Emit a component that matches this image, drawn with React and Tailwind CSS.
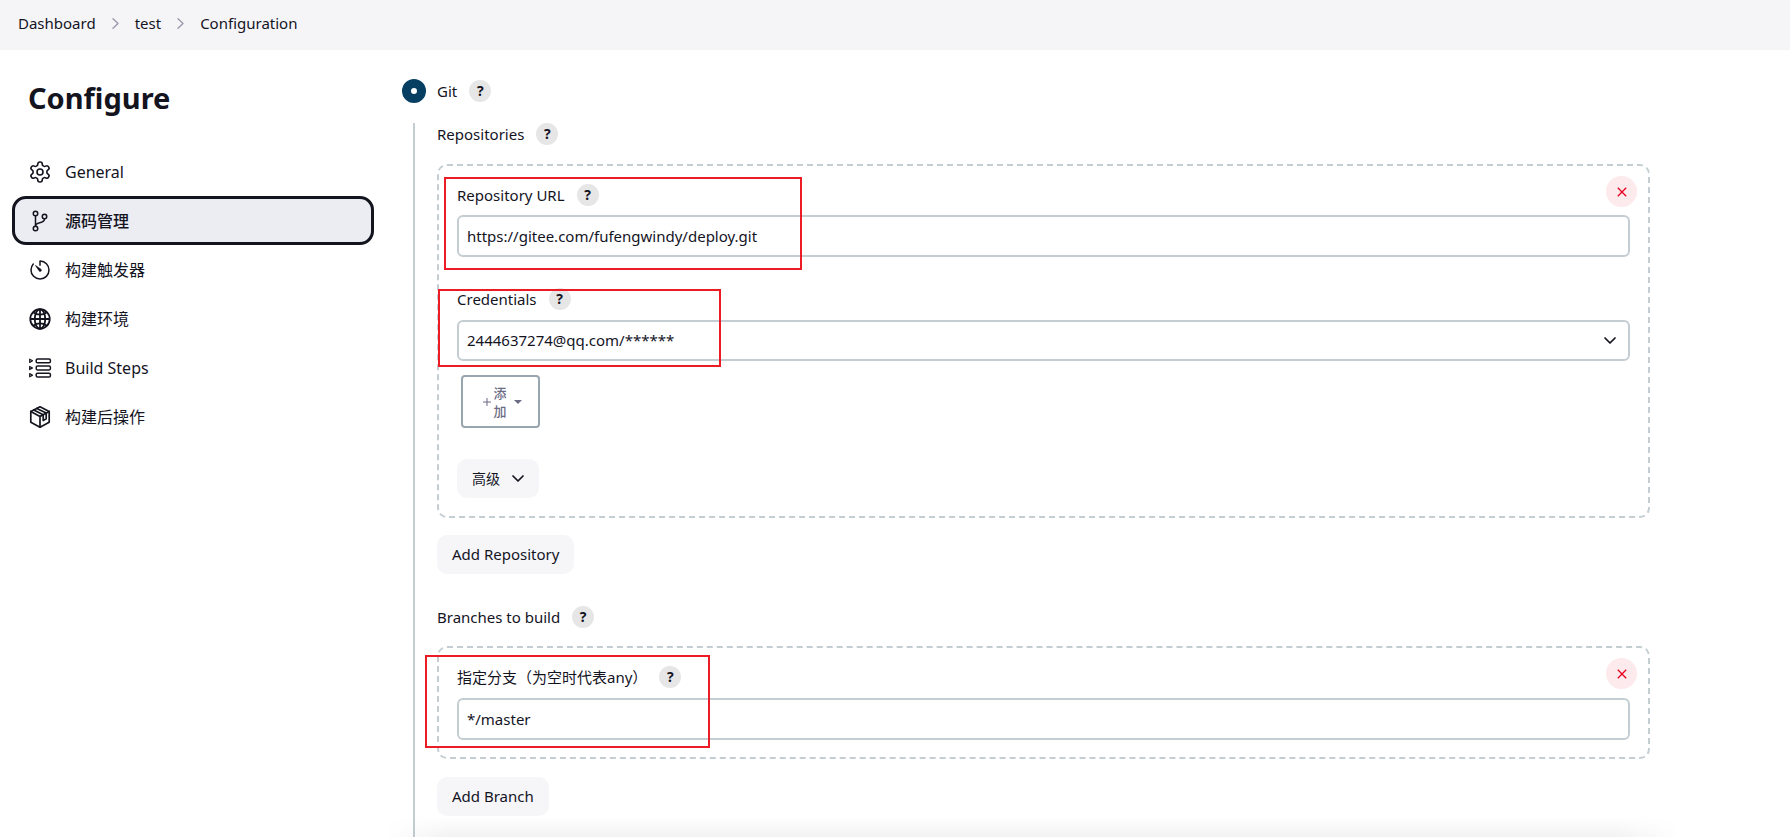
import { IoGitBranchOutline, IoTimerOutline, IoGlobeOutline } from "react-icons/io5";

const ink = "text-[#14141f]";

function GearIcon({ className }) {
  return (
    <svg className={className} viewBox="0 0 24 24" fill="none" stroke="currentColor" strokeWidth="1.6" strokeLinejoin="round" strokeLinecap="round">
      <path d="M12.22 2h-.44a2 2 0 0 0-2 2v.18a2 2 0 0 1-1 1.73l-.43.25a2 2 0 0 1-2 0l-.15-.08a2 2 0 0 0-2.73.73l-.22.38a2 2 0 0 0 .73 2.73l.15.1a2 2 0 0 1 1 1.72v.51a2 2 0 0 1-1 1.74l-.15.09a2 2 0 0 0-.73 2.73l.22.38a2 2 0 0 0 2.73.73l.15-.08a2 2 0 0 1 2 0l.43.25a2 2 0 0 1 1 1.73V20a2 2 0 0 0 2 2h.44a2 2 0 0 0 2-2v-.18a2 2 0 0 1 1-1.73l.43-.25a2 2 0 0 1 2 0l.15.08a2 2 0 0 0 2.73-.73l.22-.39a2 2 0 0 0-.73-2.73l-.15-.08a2 2 0 0 1-1-1.74v-.5a2 2 0 0 1 1-1.74l.15-.09a2 2 0 0 0 .73-2.73l-.22-.38a2 2 0 0 0-2.73-.73l-.15.08a2 2 0 0 1-2 0l-.43-.25a2 2 0 0 1-1-1.73V4a2 2 0 0 0-2-2z" />
      <circle cx="12" cy="12" r="3" />
    </svg>
  );
}

function StepsIcon({ className }) {
  return (
    <svg className={className} viewBox="0 0 24 24" fill="none" stroke="currentColor" strokeWidth="1.5" strokeLinejoin="round">
      <rect x="8.2" y="2.9" width="14.2" height="3.8" rx="1.3" />
      <rect x="8.2" y="10.1" width="14.2" height="3.8" rx="1.3" />
      <rect x="8.2" y="17.3" width="14.2" height="3.8" rx="1.3" />
      <path strokeWidth="1.2" d="M1.7 3.2l2.8 1.6-2.8 1.6zM1.7 10.4L4.5 12l-2.8 1.6zM1.7 17.6l2.8 1.6-2.8 1.6z" />
    </svg>
  );
}

function PackageIcon({ className }) {
  return (
    <svg className={className} viewBox="0 0 24 24" fill="none" stroke="currentColor" strokeWidth="1.7" strokeLinejoin="round" strokeLinecap="round">
      <path d="M12 1.8l9.2 4.6v10.9L12 22.2l-9.2-4.9V6.4z" />
      <path d="M2.8 6.4L12 11.4l9.2-5M12 11.4v10.8" />
      <path d="M5.8 4.9l9.4 4.9M8.8 3.4l9.4 4.7M15.2 9.8v5.6l3-1.7V8.1" />
    </svg>
  );
}

function ChevronRight() {
  return (
    <svg className="h-[11px] w-[7px]" viewBox="0 0 7 11" fill="none" stroke="#9a9aae" strokeWidth="1.4" strokeLinecap="round" strokeLinejoin="round">
      <path d="M1 .8l5 4.7-5 4.7" />
    </svg>
  );
}

function ChevronDown({ className }) {
  return (
    <svg className={className} viewBox="0 0 12 7" fill="none" stroke="currentColor" strokeWidth="1.7" strokeLinecap="round" strokeLinejoin="round">
      <path d="M1 1l5 5 5-5" />
    </svg>
  );
}

const nav = [
  { label: "General", Icon: GearIcon },
  { label: "源码管理", Icon: IoGitBranchOutline, active: true },
  { label: "构建触发器", Icon: IoTimerOutline },
  { label: "构建环境", Icon: IoGlobeOutline, heavy: true },
  { label: "Build Steps", Icon: StepsIcon },
  { label: "构建后操作", Icon: PackageIcon },
];

function Help({ topic }) {
  return (
    <button type="button" aria-label={`Help for ${topic}`} className="flex size-[22px] shrink-0 items-center justify-center rounded-full bg-[#e6e6e6] text-sm font-bold leading-none">
      ?
    </button>
  );
}

function Label({ htmlFor, children }) {
  return (
    <div className="flex h-[22px] items-center gap-3">
      {htmlFor ? <label htmlFor={htmlFor}>{children}</label> : <span>{children}</span>}
      <Help topic={children} />
    </div>
  );
}

function Remove({ topic }) {
  return (
    <button type="button" aria-label={`Delete ${topic}`} className="absolute top-[10px] right-[11px] flex size-[31px] items-center justify-center rounded-full bg-[#fdeaec] text-[#e6001f]">
      <svg className="size-[10px]" viewBox="0 0 10 10" fill="none" stroke="currentColor" strokeWidth="1.3">
        <path d="M.8.8l8.4 8.4M9.2.8L.8 9.2" />
      </svg>
    </button>
  );
}

function Mark({ className }) {
  return <div aria-hidden="true" className={`pointer-events-none absolute border-2 border-[#ed1c24] ${className}`} />;
}

const group = "relative rounded-[10px] border-2 border-dashed border-[#c3cdd2] px-[18px] pt-[18px]";
const box = "w-full rounded-md border-2 border-[#c3cdd2] bg-white px-2";
const soft = "rounded-[10px] bg-[#f6f6f9]";

export default function App() {
  return (
    <div className={`flex h-screen flex-col overflow-hidden bg-white font-['Noto_Sans','Noto_Sans_CJK_SC',sans-serif] text-[15px] ${ink}`}>
      <header className="h-[50px] shrink-0 bg-[#f5f5f8]">
        <nav aria-label="Breadcrumb" className="flex h-[46px] items-center gap-4 px-[18px]">
          <a href="#dashboard">Dashboard</a>
          <ChevronRight />
          <a href="#test">test</a>
          <ChevronRight />
          <a href="#configuration">Configuration</a>
        </nav>
      </header>

      <div className="flex min-h-0 flex-1">
        <aside className="w-[402px] shrink-0 pl-3 pr-7 pt-7">
          <h1 className="px-4 text-[29px] font-bold leading-10">Configure</h1>
          <nav aria-label="Sections" className="mt-[29px] flex flex-col">
            {nav.map(({ label, Icon, active, heavy }) => (
              <a
                key={label}
                href={`#${label}`}
                className={`flex h-[49px] items-center gap-[13px] rounded-[14px] border-[3px] px-[13px] text-base ${active ? "border-[#14141f] bg-[#ecedf3] font-medium" : "border-transparent"}`}
              >
                <Icon className={`size-6 shrink-0 ${heavy ? "[&_*]:[stroke-width:38]" : ""}`} />
                {label}
              </a>
            ))}
          </nav>
        </aside>

        <main className="min-w-0 flex-1 pr-[140px] pt-[29px]">
          <div className="flex h-6 items-center">
            <input id="scm-git" type="radio" name="scm" defaultChecked className="size-6 appearance-none rounded-full border-[9px] border-[#073f63] bg-white" />
            <label htmlFor="scm-git" className="ml-[11px] mr-3">Git</label>
            <Help topic="Git" />
          </div>

          <section className="ml-[11px] mt-5 h-full border-l-2 border-[#c3cdd2] pl-[22px]">
            <Label>Repositories</Label>

            <div className={`${group} mt-[19px] pb-[18px]`}>
              <Remove topic="repository" />
              <Label htmlFor="repo-url">Repository URL</Label>
              <input id="repo-url" type="text" defaultValue="https://gitee.com/fufengwindy/deploy.git" className={`${box} mt-[9px] block h-[42px]`} />
              <div className="mt-[31px]">
                <Label htmlFor="credentials">Credentials</Label>
              </div>
              <div className="relative mt-[10px]">
                <select id="credentials" className={`${box} block h-[41px] appearance-none`}>
                  <option>2444637274@qq.com/******</option>
                </select>
                <ChevronDown className="pointer-events-none absolute right-[14px] top-[17px] h-[7px] w-3" />
              </div>
              <button type="button" className="ml-1 mt-[14px] flex h-[53px] w-[79px] items-center justify-center gap-[2px] rounded border-2 border-[#98a6b0] pl-1 text-[13px] font-medium leading-[18px] text-[#6b6b85]">
                <svg className="size-2" viewBox="0 0 8 8" stroke="currentColor" strokeWidth="1"><path d="M4 0v8M0 4h8" /></svg>
                <span className="w-[14px]">添加</span>
                <svg className="ml-[5px] h-1 w-2" viewBox="0 0 8 4" fill="currentColor"><path d="M0 0h8L4 4z" /></svg>
              </button>
              <button type="button" className={`${soft} mt-[31px] flex h-[39px] items-center gap-3 px-[15px] text-sm`}>
                高级
                <ChevronDown className="h-[7px] w-3" />
              </button>
              <Mark className="left-[5px] top-[11px] h-[93px] w-[358px]" />
              <Mark className="left-[-1px] top-[123px] h-[78px] w-[283px]" />
            </div>

            <button type="button" className={`${soft} mt-[17px] block h-[39px] px-[15px]`}>Add Repository</button>

            <div className="mt-8">
              <Label>Branches to build</Label>
            </div>

            <div className={`${group} mt-[18px] pb-[17px]`}>
              <Remove topic="branch" />
              <Label htmlFor="branch">指定分支（为空时代表any）</Label>
              <input id="branch" type="text" defaultValue="*/master" className={`${box} mt-[10px] block h-[42px]`} />
              <Mark className="left-[-14px] top-[7px] h-[93px] w-[285px]" />
            </div>

            <button type="button" className={`${soft} mt-[18px] block h-[39px] px-[15px]`}>Add Branch</button>
          </section>
        </main>
      </div>
      <div aria-hidden="true" className="pointer-events-none absolute bottom-0 left-[385px] right-[110px] h-5 bg-linear-to-t from-black/5 to-transparent mask-x-from-95%" />
    </div>
  );
}
